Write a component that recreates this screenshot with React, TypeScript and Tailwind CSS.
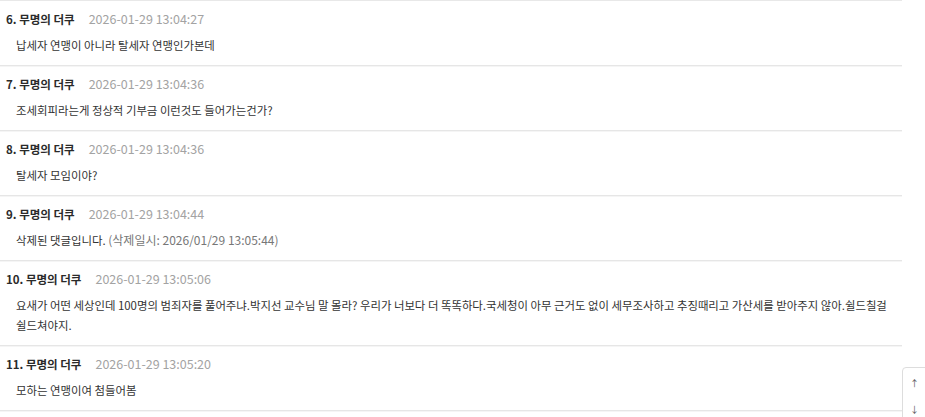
type Comment = {
  no: number;
  date: string;
  body: string;
  deletedAt?: string;
};

const comments: Comment[] = [
  { no: 6, date: "2026-01-29 13:04:27", body: "납세자 연맹이 아니라 탈세자 연맹인가본데" },
  { no: 7, date: "2026-01-29 13:04:36", body: "조세회피라는게 정상적 기부금 이런것도 들어가는건가?" },
  { no: 8, date: "2026-01-29 13:04:36", body: "탈세자 모임이야?" },
  {
    no: 9,
    date: "2026-01-29 13:04:44",
    body: "삭제된 댓글입니다.",
    deletedAt: "2026/01/29 13:05:44",
  },
  {
    no: 10,
    date: "2026-01-29 13:05:06",
    body: "요새가 어떤 세상인데 100명의 범죄자를 풀어주냐.박지선 교수님 말 몰라? 우리가 너보다 더 똑똑하다.국세청이 아무 근거도 없이 세무조사하고 추징때리고 가산세를 받아주지 않아.쉴드칠걸 쉴드쳐야지.",
  },
  { no: 11, date: "2026-01-29 13:05:20", body: "모하는 연맹이여 첨들어봄" },
];

export default function App() {
  return (
    <div className="relative h-[417px] w-[925px] overflow-hidden bg-white font-['Noto_Sans_CJK_KR','Noto_Sans',sans-serif] text-[#333]">
      <ul className="w-[902px] border-t border-[#e8e8e8]">
        {comments.map((c) => (
          <li
            key={c.no}
            className="border-b border-[#e6e6e6] pt-[8px] pb-[10px] shadow-[0_1px_0_#f5f5f5]"
          >
            <div className="flex items-center pl-[6px] leading-[20px]">
              <span className="text-[11.5px] font-bold text-[#2a2a2a]">
                {c.no}. 무명의 더쿠
              </span>
              <span className="ml-[14px] text-[12.5px] text-[#a3a3a3]">{c.date}</span>
            </div>
            <p className="mt-[6px] pl-[16px] text-[11.4px] leading-[20px] break-keep text-[#333]">
              {c.body}
              {c.deletedAt ? (
                <span className="text-[12px] text-[#777]"> (삭제일시: {c.deletedAt})</span>
              ) : null}
            </p>
          </li>
        ))}
      </ul>

      {/* scroll-to-top / bottom buttons, pinned over the list */}
      <div className="absolute top-[367px] left-[902px] flex h-[60px] w-[30px] flex-col items-start rounded-tl-[4px] border border-[#ddd] bg-white pt-[3px] pl-[7px] text-[9px] text-[#555]">
        <button type="button" className="h-[26px] leading-[14px]">↑</button>
        <button type="button" className="h-[26px] leading-[14px]">↓</button>
      </div>
    </div>
  );
}
